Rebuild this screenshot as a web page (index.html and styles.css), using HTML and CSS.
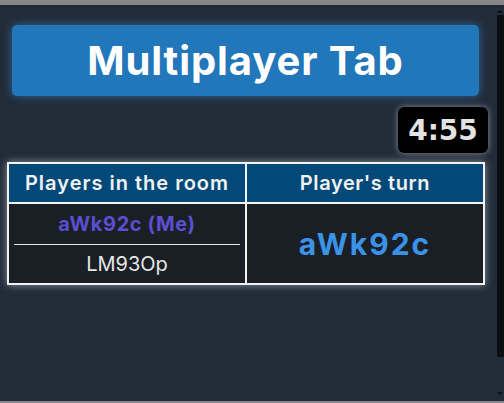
FILE: index.html
```html
<!DOCTYPE html>
<html>
<head>
<meta charset="utf-8">
<link rel="stylesheet" href="styles.css">
</head>
<body>
<div class="frame-top"></div>
<div class="viewport">
  <main class="app">
    <h1 class="title">Multiplayer Tab</h1>
    <div class="timer-row"><div class="timer">4:55</div></div>
    <table class="players">
      <thead>
        <tr><th>Players in the room</th><th class="turn-head">Player's turn</th></tr>
      </thead>
      <tbody>
        <tr>
          <td class="list">
            <div class="me">aWk92c (Me)</div>
            <div class="other">LM93Op</div>
          </td>
          <td class="turn">aWk92c</td>
        </tr>
      </tbody>
    </table>
  </main>
  <div class="scrollbar">
    <div class="arrow up"></div>
    <div class="thumb"></div>
    <div class="arrow down"></div>
  </div>
</div>
<div class="frame-bottom"></div>
</body>
</html>
```
FILE: styles.css
```css
html, body { margin: 0; padding: 0; }
body {
  width: 504px;
  height: 403px;
  overflow: hidden;
  background: #222c39;
  font-family: "Inter", "Open Sans", sans-serif;
}
.frame-top { height: 5px; background: #878787; }
.frame-bottom { height: 2px; background: #878787; }
.viewport {
  display: flex;
  height: 396px;
  background: #222c39;
}
.app {
  flex: 1;
  padding: 20px 0 0 7px;
}
.title {
  margin: 0 0 0 5px;
  width: 467px;
  height: 71px;
  box-sizing: border-box;
  background: #2276ba;
  border-radius: 5px;
  box-shadow: 0 0 10px rgba(58, 150, 230, 0.55);
  color: #fff;
  font-size: 40px;
  font-weight: 700;
  letter-spacing: 0.9px;
  display: flex;
  align-items: center;
  justify-content: center;
}
.timer-row {
  display: flex;
  justify-content: flex-end;
  padding: 11px 0 0 0;
  margin-right: 8px;
}
.timer {
  width: 90px;
  height: 46px;
  box-sizing: border-box;
  background: #000;
  border-radius: 6px;
  box-shadow: 0 0 6px rgba(200, 210, 220, 0.6);
  color: #e3e3e3;
  font-family: "DejaVu Sans", sans-serif;
  font-weight: 700;
  font-size: 28px;
  display: flex;
  align-items: center;
  justify-content: center;
}
.players {
  margin-top: 9px;
  width: 478px;
  border-collapse: collapse;
  table-layout: fixed;
  border: 2px solid #f2f2f2;
  box-shadow: 0 0 8px rgba(220, 230, 240, 0.55);
}
.players th {
  background: #02497a;
  color: #f1f1f1;
  font-size: 20px;
  font-weight: 600;
  letter-spacing: 1px;
  height: 38px;
  padding: 0;
  border: 2px solid #f2f2f2;
  border-top: 0;
}
.players th.turn-head { letter-spacing: 0.6px; }
.players td {
  background: #1a1e25;
  padding: 0;
  border: 2px solid #f2f2f2;
  text-align: center;
  vertical-align: middle;
}
.players td.list { padding: 0 5px; }
.me {
  color: #5a4fd0;
  font-weight: 700;
  font-size: 20px;
  letter-spacing: 0.6px;
  height: 40px;
  line-height: 40px;
  border-bottom: 1px solid #e6e6e6;
}
.other {
  color: #e6e6e6;
  font-size: 20px;
  height: 38px;
  line-height: 38px;
}
.turn {
  color: #3a93e8;
  font-size: 30px;
  font-weight: 700;
  letter-spacing: 2px;
}
.scrollbar {
  width: 8px;
  display: flex;
  flex-direction: column;
  align-items: center;
}
.arrow { width: 0; height: 0; border-left: 3px solid transparent; border-right: 3px solid transparent; }
.arrow.up { margin-top: 5px; border-bottom: 3px solid #0a0f14; }
.arrow.down { margin-top: 35px; border-top: 3px solid #0a0f14; }
.thumb { margin-top: 2px; width: 7px; height: 342px; background: #0a0f14; }
```
